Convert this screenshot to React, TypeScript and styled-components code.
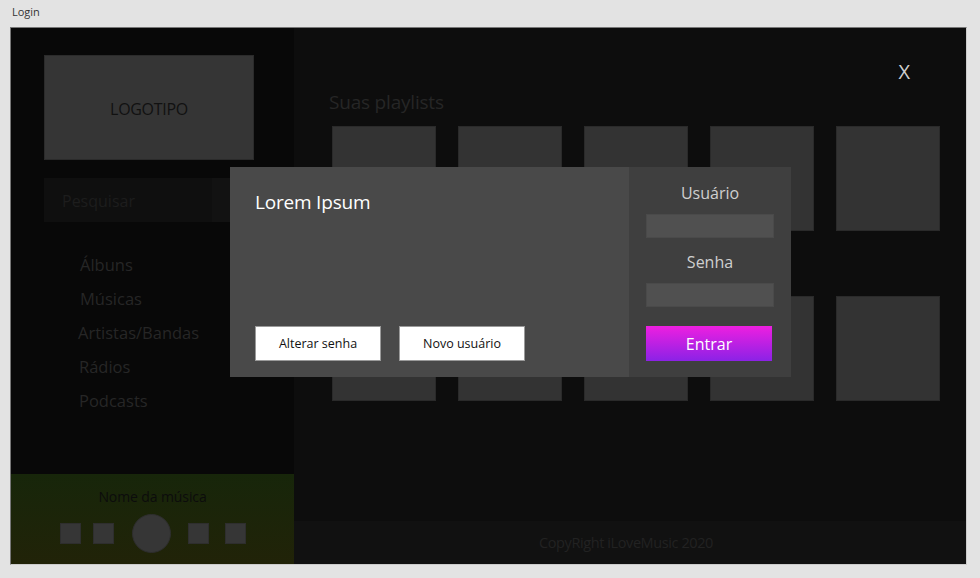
import React from "react";
import styled, { createGlobalStyle } from "styled-components";

const Global = createGlobalStyle`
  html, body { margin: 0; padding: 0; background: #e3e3e3; }
  body { font-family: "Open Sans", "Noto Sans", sans-serif; width: 980px; height: 578px; overflow: hidden; }
  * { box-sizing: border-box; }
`;

const Page = styled.div`
  position: relative;
  width: 980px;
  height: 578px;
`;

const TitleBar = styled.div`
  height: 27px;
  padding: 4px 0 0 12px;
  font-size: 11px;
  color: #333;
  font-family: "Open Sans", sans-serif;
`;

const Window = styled.div`
  margin-left: 10px;
  width: 957px;
  height: 538px;
  border: 1px solid #777;
  border-right-color: #ccc;
  border-bottom-color: #ccc;
  display: grid;
  grid-template-columns: 283px 1fr;
  background: #080808;
`;

const Sidebar = styled.div`
  display: flex;
  flex-direction: column;
  background: #080808;
`;

const Logo = styled.div`
  margin: 27px 0 0 33px;
  width: 210px;
  height: 105px;
  background: #353535;
  border: 1px solid #2b2b2b;
  display: flex;
  align-items: center;
  justify-content: center;
  padding-top: 3px;
  font-size: 16px;
  color: #111;
  letter-spacing: -0.3px;
`;

const Search = styled.div`
  margin: 18px 0 0 33px;
  display: flex;
  height: 44px;
`;

const SearchInput = styled.div`
  width: 168px;
  background: #0f0f0f;
  color: #1d1d1d;
  font-size: 16px;
  padding: 1px 0 0 18px;
  display: flex;
  align-items: center;
`;

const SearchButton = styled.div`
  width: 42px;
  background: #121212;
`;

const Menu = styled.nav`
  margin: 26px 0 0 0;
  display: flex;
  flex-direction: column;
  flex: 1;
`;

const MenuItem = styled.div<{ $x: number }>`
  height: 34px;
  line-height: 34px;
  padding-left: ${(p) => p.$x}px;
  font-size: 16.5px;
  color: #262626;
`;

const Player = styled.div`
  height: 90px;
  background: linear-gradient(180deg, #17260a 0%, #212308 100%);
  display: flex;
  flex-direction: column;
  align-items: center;
`;

const SongName = styled.div`
  margin-top: 13px;
  font-size: 14px;
  color: #0c0c0c;
  letter-spacing: -0.1px;
`;

const Controls = styled.div`
  margin-top: 8px;
  display: flex;
  align-items: center;
`;

const Ctrl = styled.div<{ $ml: number; $round?: boolean; $size: number }>`
  margin-left: ${(p) => p.$ml}px;
  width: ${(p) => p.$size}px;
  height: ${(p) => p.$size}px;
  background: #363636;
  border: 1px solid #2e2e2e;
  border-radius: ${(p) => (p.$round ? "50%" : "0")};
`;

const Main = styled.div`
  background: #0d0d0d;
  display: flex;
  flex-direction: column;
  position: relative;
`;

const Close = styled.div`
  position: absolute;
  top: 30px;
  right: 56px;
  color: #cfcfcf;
  font-size: 20px;
  font-family: "Open Sans", sans-serif;
`;

const Content = styled.div`
  flex: 1;
  padding: 59px 0 0 35px;
`;

const Title = styled.div`
  font-size: 19px;
  color: #262626;
  height: 30px;
  line-height: 30px;
  letter-spacing: -0.2px;
`;

const Grid = styled.div`
  margin: 9px 0 0 3px;
  display: grid;
  grid-template-columns: repeat(5, 104px);
  grid-auto-rows: 105px;
  column-gap: 22px;
  row-gap: 65px;
`;

const Tile = styled.div`
  background: #333;
  border: 1px solid #2a2a2a;
`;

const Footer = styled.div`
  height: 43px;
  background: #111;
  display: flex;
  align-items: center;
  justify-content: center;
  font-size: 14.5px;
  color: #222;
  font-family: "Open Sans", sans-serif;
  letter-spacing: -0.4px;
  padding-right: 8px;
`;

const Modal = styled.div`
  position: absolute;
  left: 230px;
  top: 167px;
  width: 561px;
  height: 210px;
  display: grid;
  grid-template-columns: 399px 1fr;
`;

const ModalLeft = styled.div`
  background: #494949;
  padding: 22px 0 0 25px;
  display: flex;
  flex-direction: column;
`;

const ModalTitle = styled.div`
  font-size: 19px;
  color: #fff;
  letter-spacing: -0.2px;
`;

const ButtonRow = styled.div`
  margin-top: auto;
  margin-bottom: 16px;
  display: flex;
  gap: 18px;
`;

const WhiteButton = styled.button`
  width: 126px;
  height: 35px;
  background: #fff;
  border: 1px solid #9a9a9a;
  color: #111;
  font-family: "Open Sans", sans-serif;
  font-size: 12.5px;
  padding: 0;
`;

const ModalRight = styled.div`
  background: #3f3f3f;
  display: flex;
  flex-direction: column;
  align-items: flex-start;
  padding: 13px 0 0 17px;
`;

const Label = styled.div`
  width: 128px;
  text-align: center;
  font-size: 16px;
  color: #cfcfcf;
  height: 26px;
  line-height: 26px;
`;

const Input = styled.div`
  width: 128px;
  height: 24px;
  background: #505050;
  border: 1px solid #4a4a4a;
  margin: 8px 0 11px;
`;

const Enter = styled.button`
  margin-top: 8px;
  width: 126px;
  height: 35px;
  border: none;
  background: linear-gradient(180deg, #ee1fe0 0%, #8b22e6 100%);
  color: #fff;
  font-family: "Open Sans", sans-serif;
  font-size: 16px;
  padding: 0;
`;

const menu: [string, number][] = [
  ["Álbuns", 69],
  ["Músicas", 69],
  ["Artistas/Bandas", 67],
  ["Rádios", 68],
  ["Podcasts", 68],
];

export default function App() {
  return (
    <Page>
      <Global />
      <TitleBar>Login</TitleBar>
      <Window>
        <Sidebar>
          <Logo>LOGOTIPO</Logo>
          <Search>
            <SearchInput>Pesquisar</SearchInput>
            <SearchButton />
          </Search>
          <Menu>
            {menu.map(([t, x]) => (
              <MenuItem key={t} $x={x}>
                {t}
              </MenuItem>
            ))}
          </Menu>
          <Player>
            <SongName>Nome da música</SongName>
            <Controls>
              <Ctrl $ml={0} $size={21} />
              <Ctrl $ml={12} $size={21} />
              <Ctrl $ml={18} $size={39} $round />
              <Ctrl $ml={17} $size={21} />
              <Ctrl $ml={16} $size={21} />
            </Controls>
          </Player>
        </Sidebar>
        <Main>
          <Close>X</Close>
          <Content>
            <Title>Suas playlists</Title>
            <Grid>
              {Array.from({ length: 10 }).map((_, i) => (
                <Tile key={i} />
              ))}
            </Grid>
          </Content>
          <Footer>CopyRight iLoveMusic 2020</Footer>
        </Main>
      </Window>
      <Modal>
        <ModalLeft>
          <ModalTitle>Lorem Ipsum</ModalTitle>
          <ButtonRow>
            <WhiteButton>Alterar senha</WhiteButton>
            <WhiteButton>Novo usuário</WhiteButton>
          </ButtonRow>
        </ModalLeft>
        <ModalRight>
          <Label>Usuário</Label>
          <Input />
          <Label>Senha</Label>
          <Input />
          <Enter>Entrar</Enter>
        </ModalRight>
      </Modal>
    </Page>
  );
}
